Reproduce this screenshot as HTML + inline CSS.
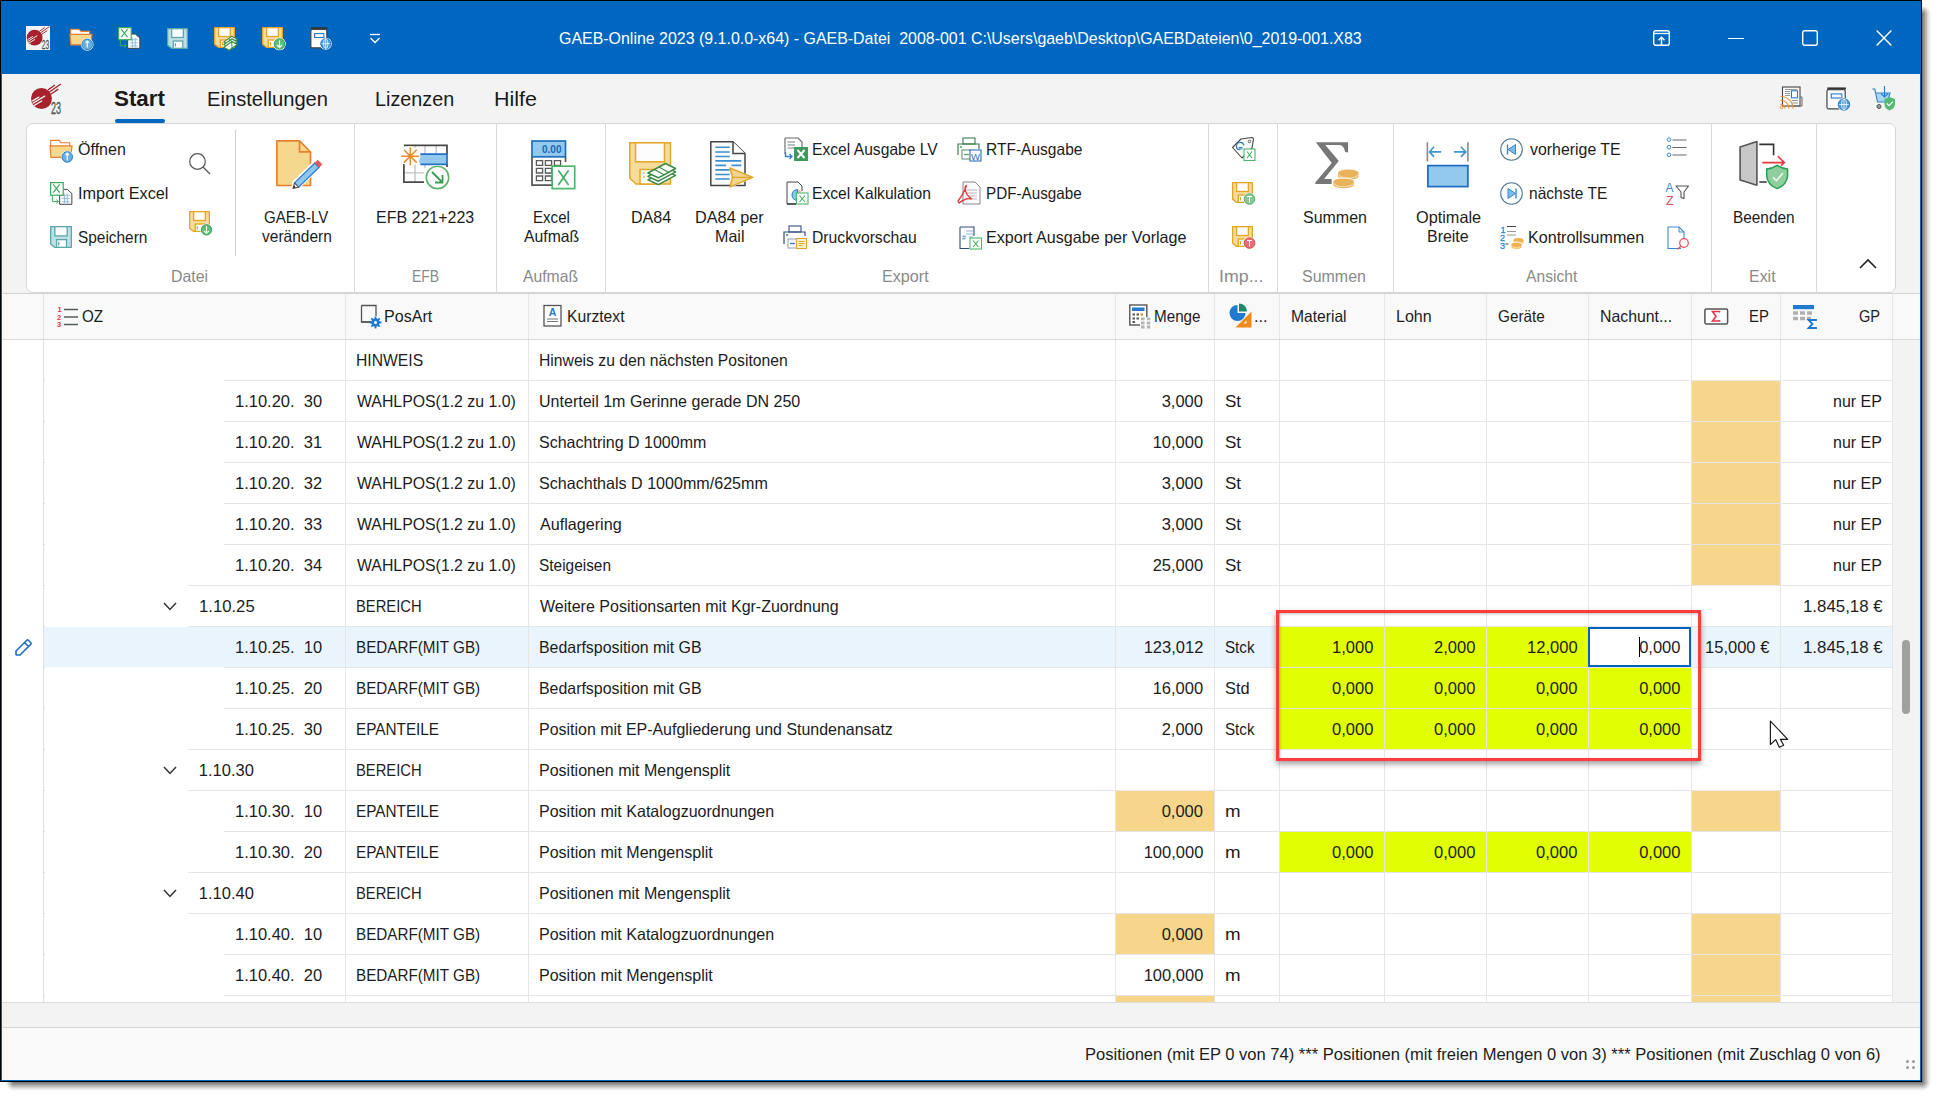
<!DOCTYPE html>
<html><head><meta charset="utf-8"><title>GAEB-Online</title>
<style>
html,body{margin:0;padding:0;width:1937px;height:1097px;overflow:hidden;background:#fff;}
body{position:relative;font-family:"Liberation Sans",sans-serif;}
.r{position:absolute;box-sizing:border-box;}
svg.r{overflow:visible}
.t{position:absolute;white-space:pre;line-height:1;}
</style></head><body>
<div class="r" style="left:1922px;top:14px;width:9px;height:1068px;background:linear-gradient(to right, rgba(0,0,0,0.56), rgba(0,0,0,0.34) 35%, rgba(0,0,0,0.12) 70%, rgba(0,0,0,0) 100%)"></div>
<div class="r" style="left:14px;top:1082px;width:1908px;height:9px;background:linear-gradient(to bottom, rgba(0,0,0,0.56), rgba(0,0,0,0.34) 35%, rgba(0,0,0,0.12) 70%, rgba(0,0,0,0) 100%)"></div>
<div class="r" style="left:1922px;top:1082px;width:9px;height:9px;background:radial-gradient(circle 9px at 0 0, rgba(0,0,0,0.56), rgba(0,0,0,0.34) 35%, rgba(0,0,0,0.12) 70%, rgba(0,0,0,0) 100%)"></div>
<div class="r" style="left:1922px;top:5px;width:9px;height:9px;background:radial-gradient(circle 9px at 0 100%, rgba(0,0,0,0.56), rgba(0,0,0,0.34) 35%, rgba(0,0,0,0.12) 70%, rgba(0,0,0,0) 100%)"></div>
<div class="r" style="left:5px;top:1082px;width:9px;height:9px;background:radial-gradient(circle 9px at 100% 0, rgba(0,0,0,0.56), rgba(0,0,0,0.34) 35%, rgba(0,0,0,0.12) 70%, rgba(0,0,0,0) 100%)"></div>
<div class="r" style="left:0px;top:0px;width:1922px;height:1082px;background:#000;"></div>
<div class="r" style="left:1px;top:1px;width:1920px;height:1080px;background:#0067c0;"></div>
<div class="r" style="left:2px;top:74px;width:1918px;height:220px;background:#f3f3f3;"></div>
<div class="t" id="t0" style="top:30.58px;font-size:16.8px;color:#ffffff;left:559.06px;transform:scaleX(0.9498);transform-origin:0 0;">GAEB-Online 2023 (9.1.0.0-x64) - GAEB-Datei  2008-001 C:\Users\gaeb\Desktop\GAEBDateien\0_2019-001.X83</div>
<div class="t" id="t1" style="top:87.78px;font-size:22px;color:#1a1a1a;font-weight:bold;left:114.48px;transform:scaleX(1.0165);transform-origin:0 0;">Start</div>
<div class="r" style="left:115px;top:119px;width:50px;height:4px;background:#0067c0;border-radius:2px;"></div>
<div class="t" id="t2" style="top:88.22px;font-size:21px;color:#1a1a1a;left:206.70px;transform:scaleX(0.9597);transform-origin:0 0;">Einstellungen</div>
<div class="t" id="t3" style="top:88.22px;font-size:21px;color:#1a1a1a;left:374.51px;transform:scaleX(0.9431);transform-origin:0 0;">Lizenzen</div>
<div class="t" id="t4" style="top:88.22px;font-size:21px;color:#1a1a1a;left:493.95px;transform:scaleX(1.0225);transform-origin:0 0;">Hilfe</div>
<div class="r" style="left:26px;top:123px;width:1870px;height:170px;background:#fff;border:1px solid #d6d6d6;border-radius:7px;"></div>
<div class="r" style="left:2px;top:293px;width:1918px;height:1px;background:#d2d2d2;"></div>
<div class="r" style="left:354px;top:124px;width:1px;height:168px;background:#dadada;"></div>
<div class="r" style="left:496px;top:124px;width:1px;height:168px;background:#dadada;"></div>
<div class="r" style="left:605px;top:124px;width:1px;height:168px;background:#dadada;"></div>
<div class="r" style="left:1208px;top:124px;width:1px;height:168px;background:#dadada;"></div>
<div class="r" style="left:1277px;top:124px;width:1px;height:168px;background:#dadada;"></div>
<div class="r" style="left:1393px;top:124px;width:1px;height:168px;background:#dadada;"></div>
<div class="r" style="left:1711px;top:124px;width:1px;height:168px;background:#dadada;"></div>
<div class="r" style="left:1816px;top:124px;width:1px;height:168px;background:#dadada;"></div>
<div class="r" style="left:235px;top:130px;width:1px;height:126px;background:#d0d0d0;"></div>
<div class="t" id="t5" style="top:268.03px;font-size:16.5px;color:#8a8a8a;left:171.02px;transform:scaleX(0.9642);transform-origin:0 0;">Datei</div>
<div class="t" id="t6" style="top:268.03px;font-size:16.5px;color:#8a8a8a;left:411.64px;transform:scaleX(0.8440);transform-origin:0 0;">EFB</div>
<div class="t" id="t7" style="top:268.03px;font-size:16.5px;color:#8a8a8a;left:522.60px;transform:scaleX(0.9529);transform-origin:0 0;">Aufmaß</div>
<div class="t" id="t8" style="top:268.03px;font-size:16.5px;color:#8a8a8a;left:882.02px;transform:scaleX(0.9787);transform-origin:0 0;">Export</div>
<div class="t" id="t9" style="top:268.03px;font-size:16.5px;color:#8a8a8a;left:1218.90px;transform:scaleX(1.0776);transform-origin:0 0;">Imp...</div>
<div class="t" id="t10" style="top:268.03px;font-size:16.5px;color:#8a8a8a;left:1302.03px;transform:scaleX(0.9688);transform-origin:0 0;">Summen</div>
<div class="t" id="t11" style="top:268.03px;font-size:16.5px;color:#8a8a8a;left:1526.42px;transform:scaleX(0.9487);transform-origin:0 0;">Ansicht</div>
<div class="t" id="t12" style="top:268.03px;font-size:16.5px;color:#8a8a8a;left:1749.04px;transform:scaleX(0.9659);transform-origin:0 0;">Exit</div>
<div class="t" id="t13" style="top:141.03px;font-size:16.5px;color:#1c1c1c;left:77.80px;transform:scaleX(0.9713);transform-origin:0 0;">Öffnen</div>
<div class="t" id="t14" style="top:185.03px;font-size:16.5px;color:#1c1c1c;left:77.60px;transform:scaleX(0.9869);transform-origin:0 0;">Import Excel</div>
<div class="t" id="t15" style="top:229.03px;font-size:16.5px;color:#1c1c1c;left:77.63px;transform:scaleX(0.9334);transform-origin:0 0;">Speichern</div>
<div class="t" id="t16" style="top:208.53px;font-size:16.5px;color:#1c1c1c;left:263.66px;transform:scaleX(0.9133);transform-origin:0 0;">GAEB-LV</div>
<div class="t" id="t17" style="top:227.53px;font-size:16.5px;color:#1c1c1c;left:262.21px;transform:scaleX(0.9398);transform-origin:0 0;">verändern</div>
<div class="t" id="t18" style="top:208.53px;font-size:16.5px;color:#1c1c1c;left:376.07px;transform:scaleX(0.9690);transform-origin:0 0;">EFB 221+223</div>
<div class="t" id="t19" style="top:208.53px;font-size:16.5px;color:#1c1c1c;left:532.69px;transform:scaleX(0.9135);transform-origin:0 0;">Excel</div>
<div class="t" id="t20" style="top:227.53px;font-size:16.5px;color:#1c1c1c;left:524.21px;transform:scaleX(0.9546);transform-origin:0 0;">Aufmaß</div>
<div class="t" id="t21" style="top:208.53px;font-size:16.5px;color:#1c1c1c;left:631.23px;transform:scaleX(0.9735);transform-origin:0 0;">DA84</div>
<div class="t" id="t22" style="top:208.53px;font-size:16.5px;color:#1c1c1c;left:695.01px;transform:scaleX(0.9855);transform-origin:0 0;">DA84 per</div>
<div class="t" id="t23" style="top:227.53px;font-size:16.5px;color:#1c1c1c;left:715.05px;transform:scaleX(0.9733);transform-origin:0 0;">Mail</div>
<div class="t" id="t24" style="top:141.03px;font-size:16.5px;color:#1c1c1c;left:811.91px;transform:scaleX(0.9479);transform-origin:0 0;">Excel Ausgabe LV</div>
<div class="t" id="t25" style="top:185.03px;font-size:16.5px;color:#1c1c1c;left:811.87px;transform:scaleX(0.9466);transform-origin:0 0;">Excel Kalkulation</div>
<div class="t" id="t26" style="top:229.03px;font-size:16.5px;color:#1c1c1c;left:811.89px;transform:scaleX(0.9525);transform-origin:0 0;">Druckvorschau</div>
<div class="t" id="t27" style="top:141.03px;font-size:16.5px;color:#1c1c1c;left:986.02px;transform:scaleX(0.9416);transform-origin:0 0;">RTF-Ausgabe</div>
<div class="t" id="t28" style="top:185.03px;font-size:16.5px;color:#1c1c1c;left:986.04px;transform:scaleX(0.9230);transform-origin:0 0;">PDF-Ausgabe</div>
<div class="t" id="t29" style="top:229.03px;font-size:16.5px;color:#1c1c1c;left:986.03px;transform:scaleX(0.9756);transform-origin:0 0;">Export Ausgabe per Vorlage</div>
<div class="t" id="t30" style="top:208.53px;font-size:16.5px;color:#1c1c1c;left:1303.03px;transform:scaleX(0.9688);transform-origin:0 0;">Summen</div>
<div class="t" id="t31" style="top:208.53px;font-size:16.5px;color:#1c1c1c;left:1415.97px;transform:scaleX(0.9866);transform-origin:0 0;">Optimale</div>
<div class="t" id="t32" style="top:227.53px;font-size:16.5px;color:#1c1c1c;left:1427.29px;transform:scaleX(0.9668);transform-origin:0 0;">Breite</div>
<div class="t" id="t33" style="top:141.03px;font-size:16.5px;color:#1c1c1c;left:1529.62px;transform:scaleX(0.9625);transform-origin:0 0;">vorherige TE</div>
<div class="t" id="t34" style="top:185.03px;font-size:16.5px;color:#1c1c1c;left:1528.72px;transform:scaleX(0.9410);transform-origin:0 0;">nächste TE</div>
<div class="t" id="t35" style="top:229.03px;font-size:16.5px;color:#1c1c1c;left:1527.99px;transform:scaleX(0.9751);transform-origin:0 0;">Kontrollsummen</div>
<div class="t" id="t36" style="top:208.53px;font-size:16.5px;color:#1c1c1c;left:1733.49px;transform:scaleX(0.9312);transform-origin:0 0;">Beenden</div>
<svg class="r" style="left:1858px;top:258px" width="20" height="12" viewBox="0 0 20 12"><polyline points="2,10 10,2 18,10" fill="none" stroke="#222" stroke-width="1.6"/></svg>
<div class="r" style="left:2px;top:294px;width:1918px;height:45px;background:#f9f9f9;"></div>
<div class="r" style="left:2px;top:339px;width:1890px;height:663px;background:#ffffff;"></div>
<div class="r" style="left:1892px;top:339px;width:28px;height:663px;background:#f3f3f3;"></div>
<div class="r" style="left:1902px;top:640px;width:8px;height:74px;background:#a0a0a0;border-radius:4px;"></div>
<div class="r" style="left:2px;top:1002px;width:1918px;height:25px;background:#f3f3f3;"></div>
<div class="r" style="left:2px;top:1002px;width:1918px;height:1px;background:#dcdcdc;"></div>
<div class="r" style="left:2px;top:1027px;width:1918px;height:1px;background:#d6d6d6;"></div>
<div class="r" style="left:2px;top:1028px;width:1918px;height:52px;background:#f9f9f9;"></div>
<div class="r" style="left:224px;top:380px;width:1668px;height:1px;background:#e6e6e6;"></div>
<div class="r" style="left:44px;top:380px;width:1px;height:1px;background:#d8d8d8;"></div>
<div class="t" style="top:352.03px;left:356.15px;font-size:16.5px;color:#1c1c1c;transform:scaleX(0.9507);transform-origin:0 0">HINWEIS</div>
<div class="t" style="top:352.03px;left:539.15px;font-size:16.5px;color:#1c1c1c;transform:scaleX(0.9512);transform-origin:0 0">Hinweis zu den nächsten Positonen</div>
<div class="r" style="left:1691px;top:381px;width:89px;height:40px;background:#f5d68b;"></div>
<div class="r" style="left:224px;top:421px;width:1668px;height:1px;background:#e6e6e6;"></div>
<div class="r" style="left:44px;top:421px;width:1px;height:1px;background:#d8d8d8;"></div>
<div class="t" style="top:393.03px;left:235.30px;font-size:16.5px;color:#1c1c1c;transform:scaleX(0.9988);transform-origin:0 0">1.10.20.  30</div>
<div class="t" style="top:393.03px;left:357.10px;font-size:16.5px;color:#1c1c1c;transform:scaleX(0.9598);transform-origin:0 0">WAHLPOS(1.2 zu 1.0)</div>
<div class="t" style="top:393.03px;left:539.13px;font-size:16.5px;color:#1c1c1c;transform:scaleX(0.9723);transform-origin:0 0">Unterteil 1m Gerinne gerade DN 250</div>
<div class="t" style="top:393.03px;left:1161.70px;font-size:16.5px;color:#1c1c1c;transform:scaleX(1.0000);transform-origin:0 0">3,000</div>
<div class="t" style="top:393.03px;left:1225.17px;font-size:16.5px;color:#1c1c1c;transform:scaleX(1.0333);transform-origin:0 0">St</div>
<div class="t" style="top:393.03px;left:1832.73px;font-size:16.5px;color:#1c1c1c;transform:scaleX(0.9694);transform-origin:0 0">nur EP</div>
<div class="r" style="left:1691px;top:422px;width:89px;height:40px;background:#f5d68b;"></div>
<div class="r" style="left:224px;top:462px;width:1668px;height:1px;background:#e6e6e6;"></div>
<div class="r" style="left:44px;top:462px;width:1px;height:1px;background:#d8d8d8;"></div>
<div class="t" style="top:434.03px;left:235.30px;font-size:16.5px;color:#1c1c1c;transform:scaleX(0.9988);transform-origin:0 0">1.10.20.  31</div>
<div class="t" style="top:434.03px;left:357.10px;font-size:16.5px;color:#1c1c1c;transform:scaleX(0.9598);transform-origin:0 0">WAHLPOS(1.2 zu 1.0)</div>
<div class="t" style="top:434.03px;left:539.13px;font-size:16.5px;color:#1c1c1c;transform:scaleX(0.9708);transform-origin:0 0">Schachtring D 1000mm</div>
<div class="t" style="top:434.03px;left:1152.70px;font-size:16.5px;color:#1c1c1c;transform:scaleX(1.0000);transform-origin:0 0">10,000</div>
<div class="t" style="top:434.03px;left:1225.17px;font-size:16.5px;color:#1c1c1c;transform:scaleX(1.0333);transform-origin:0 0">St</div>
<div class="t" style="top:434.03px;left:1832.73px;font-size:16.5px;color:#1c1c1c;transform:scaleX(0.9694);transform-origin:0 0">nur EP</div>
<div class="r" style="left:1691px;top:463px;width:89px;height:40px;background:#f5d68b;"></div>
<div class="r" style="left:224px;top:503px;width:1668px;height:1px;background:#e6e6e6;"></div>
<div class="r" style="left:44px;top:503px;width:1px;height:1px;background:#d8d8d8;"></div>
<div class="t" style="top:475.03px;left:235.30px;font-size:16.5px;color:#1c1c1c;transform:scaleX(0.9988);transform-origin:0 0">1.10.20.  32</div>
<div class="t" style="top:475.03px;left:357.10px;font-size:16.5px;color:#1c1c1c;transform:scaleX(0.9598);transform-origin:0 0">WAHLPOS(1.2 zu 1.0)</div>
<div class="t" style="top:475.03px;left:539.13px;font-size:16.5px;color:#1c1c1c;transform:scaleX(0.9747);transform-origin:0 0">Schachthals D 1000mm/625mm</div>
<div class="t" style="top:475.03px;left:1161.70px;font-size:16.5px;color:#1c1c1c;transform:scaleX(1.0000);transform-origin:0 0">3,000</div>
<div class="t" style="top:475.03px;left:1225.17px;font-size:16.5px;color:#1c1c1c;transform:scaleX(1.0333);transform-origin:0 0">St</div>
<div class="t" style="top:475.03px;left:1832.73px;font-size:16.5px;color:#1c1c1c;transform:scaleX(0.9694);transform-origin:0 0">nur EP</div>
<div class="r" style="left:1691px;top:504px;width:89px;height:40px;background:#f5d68b;"></div>
<div class="r" style="left:224px;top:544px;width:1668px;height:1px;background:#e6e6e6;"></div>
<div class="r" style="left:44px;top:544px;width:1px;height:1px;background:#d8d8d8;"></div>
<div class="t" style="top:516.03px;left:235.30px;font-size:16.5px;color:#1c1c1c;transform:scaleX(0.9988);transform-origin:0 0">1.10.20.  33</div>
<div class="t" style="top:516.03px;left:357.10px;font-size:16.5px;color:#1c1c1c;transform:scaleX(0.9598);transform-origin:0 0">WAHLPOS(1.2 zu 1.0)</div>
<div class="t" style="top:516.03px;left:540.10px;font-size:16.5px;color:#1c1c1c;transform:scaleX(0.9783);transform-origin:0 0">Auflagering</div>
<div class="t" style="top:516.03px;left:1161.70px;font-size:16.5px;color:#1c1c1c;transform:scaleX(1.0000);transform-origin:0 0">3,000</div>
<div class="t" style="top:516.03px;left:1225.17px;font-size:16.5px;color:#1c1c1c;transform:scaleX(1.0333);transform-origin:0 0">St</div>
<div class="t" style="top:516.03px;left:1832.73px;font-size:16.5px;color:#1c1c1c;transform:scaleX(0.9694);transform-origin:0 0">nur EP</div>
<div class="r" style="left:1691px;top:545px;width:89px;height:40px;background:#f5d68b;"></div>
<div class="r" style="left:188px;top:585px;width:1704px;height:1px;background:#e6e6e6;"></div>
<div class="r" style="left:44px;top:585px;width:1px;height:1px;background:#d8d8d8;"></div>
<div class="t" style="top:557.03px;left:235.30px;font-size:16.5px;color:#1c1c1c;transform:scaleX(0.9988);transform-origin:0 0">1.10.20.  34</div>
<div class="t" style="top:557.03px;left:357.10px;font-size:16.5px;color:#1c1c1c;transform:scaleX(0.9598);transform-origin:0 0">WAHLPOS(1.2 zu 1.0)</div>
<div class="t" style="top:557.03px;left:539.17px;font-size:16.5px;color:#1c1c1c;transform:scaleX(0.9347);transform-origin:0 0">Steigeisen</div>
<div class="t" style="top:557.03px;left:1152.70px;font-size:16.5px;color:#1c1c1c;transform:scaleX(1.0000);transform-origin:0 0">25,000</div>
<div class="t" style="top:557.03px;left:1225.17px;font-size:16.5px;color:#1c1c1c;transform:scaleX(1.0333);transform-origin:0 0">St</div>
<div class="t" style="top:557.03px;left:1832.73px;font-size:16.5px;color:#1c1c1c;transform:scaleX(0.9694);transform-origin:0 0">nur EP</div>
<div class="r" style="left:188px;top:626px;width:1704px;height:1px;background:#e6e6e6;"></div>
<div class="r" style="left:44px;top:626px;width:1px;height:1px;background:#d8d8d8;"></div>
<div class="t" style="top:598.03px;left:198.79px;font-size:16.5px;color:#1c1c1c;transform:scaleX(1.0113);transform-origin:0 0">1.10.25</div>
<svg class="r" style="left:163px;top:602px" width="14" height="9" viewBox="0 0 14 9"><polyline points="1,1 7,7.5 13,1" fill="none" stroke="#333" stroke-width="1.5"/></svg>
<div class="t" style="top:598.03px;left:356.21px;font-size:16.5px;color:#1c1c1c;transform:scaleX(0.8944);transform-origin:0 0">BEREICH</div>
<div class="t" style="top:598.03px;left:540.10px;font-size:16.5px;color:#1c1c1c;transform:scaleX(0.9700);transform-origin:0 0">Weitere Positionsarten mit Kgr-Zuordnung</div>
<div class="t" style="top:598.03px;left:1802.58px;font-size:16.5px;color:#1c1c1c;transform:scaleX(1.0211);transform-origin:0 0">1.845,18 €</div>
<div class="r" style="left:44px;top:627px;width:1848px;height:40px;background:#eaf4fd;"></div>
<div class="r" style="left:1279px;top:627px;width:105px;height:40px;background:#e1ff00;"></div>
<div class="r" style="left:1384px;top:627px;width:102px;height:40px;background:#e1ff00;"></div>
<div class="r" style="left:1486px;top:627px;width:102px;height:40px;background:#e1ff00;"></div>
<div class="r" style="left:224px;top:667px;width:1668px;height:1px;background:#e6e6e6;"></div>
<div class="r" style="left:44px;top:667px;width:1px;height:1px;background:#d8d8d8;"></div>
<div class="t" style="top:639.03px;left:235.30px;font-size:16.5px;color:#1c1c1c;transform:scaleX(0.9988);transform-origin:0 0">1.10.25.  10</div>
<div class="t" style="top:639.03px;left:356.18px;font-size:16.5px;color:#1c1c1c;transform:scaleX(0.9233);transform-origin:0 0">BEDARF(MIT GB)</div>
<div class="t" style="top:639.03px;left:539.14px;font-size:16.5px;color:#1c1c1c;transform:scaleX(0.9635);transform-origin:0 0">Bedarfsposition mit GB</div>
<div class="t" style="top:639.03px;left:1143.70px;font-size:16.5px;color:#1c1c1c;transform:scaleX(1.0000);transform-origin:0 0">123,012</div>
<div class="t" style="top:639.03px;left:1225.28px;font-size:16.5px;color:#1c1c1c;transform:scaleX(0.9194);transform-origin:0 0">Stck</div>
<div class="t" style="top:639.03px;left:1332.10px;font-size:16.5px;color:#1c1c1c;transform:scaleX(1.0000);transform-origin:0 0">1,000</div>
<div class="t" style="top:639.03px;left:1434.10px;font-size:16.5px;color:#1c1c1c;transform:scaleX(1.0000);transform-origin:0 0">2,000</div>
<div class="t" style="top:639.03px;left:1527.10px;font-size:16.5px;color:#1c1c1c;transform:scaleX(1.0000);transform-origin:0 0">12,000</div>
<div class="t" style="top:639.03px;left:1704.90px;font-size:16.5px;color:#1c1c1c;transform:scaleX(1.0016);transform-origin:0 0">15,000 €</div>
<div class="t" style="top:639.03px;left:1802.58px;font-size:16.5px;color:#1c1c1c;transform:scaleX(1.0211);transform-origin:0 0">1.845,18 €</div>
<div class="r" style="left:1279px;top:668px;width:105px;height:40px;background:#e1ff00;"></div>
<div class="r" style="left:1384px;top:668px;width:102px;height:40px;background:#e1ff00;"></div>
<div class="r" style="left:1486px;top:668px;width:102px;height:40px;background:#e1ff00;"></div>
<div class="r" style="left:1588px;top:668px;width:103px;height:40px;background:#e1ff00;"></div>
<div class="r" style="left:224px;top:708px;width:1668px;height:1px;background:#e6e6e6;"></div>
<div class="r" style="left:44px;top:708px;width:1px;height:1px;background:#d8d8d8;"></div>
<div class="t" style="top:680.03px;left:235.30px;font-size:16.5px;color:#1c1c1c;transform:scaleX(0.9988);transform-origin:0 0">1.10.25.  20</div>
<div class="t" style="top:680.03px;left:356.18px;font-size:16.5px;color:#1c1c1c;transform:scaleX(0.9233);transform-origin:0 0">BEDARF(MIT GB)</div>
<div class="t" style="top:680.03px;left:539.14px;font-size:16.5px;color:#1c1c1c;transform:scaleX(0.9635);transform-origin:0 0">Bedarfsposition mit GB</div>
<div class="t" style="top:680.03px;left:1152.70px;font-size:16.5px;color:#1c1c1c;transform:scaleX(1.0000);transform-origin:0 0">16,000</div>
<div class="t" style="top:680.03px;left:1225.21px;font-size:16.5px;color:#1c1c1c;transform:scaleX(0.9913);transform-origin:0 0">Std</div>
<div class="t" style="top:680.03px;left:1332.10px;font-size:16.5px;color:#1c1c1c;transform:scaleX(1.0000);transform-origin:0 0">0,000</div>
<div class="t" style="top:680.03px;left:1434.10px;font-size:16.5px;color:#1c1c1c;transform:scaleX(1.0000);transform-origin:0 0">0,000</div>
<div class="t" style="top:680.03px;left:1536.10px;font-size:16.5px;color:#1c1c1c;transform:scaleX(1.0000);transform-origin:0 0">0,000</div>
<div class="t" style="top:680.03px;left:1639.20px;font-size:16.5px;color:#1c1c1c;transform:scaleX(1.0000);transform-origin:0 0">0,000</div>
<div class="r" style="left:1279px;top:709px;width:105px;height:40px;background:#e1ff00;"></div>
<div class="r" style="left:1384px;top:709px;width:102px;height:40px;background:#e1ff00;"></div>
<div class="r" style="left:1486px;top:709px;width:102px;height:40px;background:#e1ff00;"></div>
<div class="r" style="left:1588px;top:709px;width:103px;height:40px;background:#e1ff00;"></div>
<div class="r" style="left:188px;top:749px;width:1704px;height:1px;background:#e6e6e6;"></div>
<div class="r" style="left:44px;top:749px;width:1px;height:1px;background:#d8d8d8;"></div>
<div class="t" style="top:721.03px;left:235.30px;font-size:16.5px;color:#1c1c1c;transform:scaleX(0.9988);transform-origin:0 0">1.10.25.  30</div>
<div class="t" style="top:721.03px;left:356.17px;font-size:16.5px;color:#1c1c1c;transform:scaleX(0.9273);transform-origin:0 0">EPANTEILE</div>
<div class="t" style="top:721.03px;left:539.13px;font-size:16.5px;color:#1c1c1c;transform:scaleX(0.9668);transform-origin:0 0">Position mit EP-Aufgliederung und Stundenansatz</div>
<div class="t" style="top:721.03px;left:1161.70px;font-size:16.5px;color:#1c1c1c;transform:scaleX(1.0000);transform-origin:0 0">2,000</div>
<div class="t" style="top:721.03px;left:1225.28px;font-size:16.5px;color:#1c1c1c;transform:scaleX(0.9194);transform-origin:0 0">Stck</div>
<div class="t" style="top:721.03px;left:1332.10px;font-size:16.5px;color:#1c1c1c;transform:scaleX(1.0000);transform-origin:0 0">0,000</div>
<div class="t" style="top:721.03px;left:1434.10px;font-size:16.5px;color:#1c1c1c;transform:scaleX(1.0000);transform-origin:0 0">0,000</div>
<div class="t" style="top:721.03px;left:1536.10px;font-size:16.5px;color:#1c1c1c;transform:scaleX(1.0000);transform-origin:0 0">0,000</div>
<div class="t" style="top:721.03px;left:1639.20px;font-size:16.5px;color:#1c1c1c;transform:scaleX(1.0000);transform-origin:0 0">0,000</div>
<div class="r" style="left:188px;top:790px;width:1704px;height:1px;background:#e6e6e6;"></div>
<div class="r" style="left:44px;top:790px;width:1px;height:1px;background:#d8d8d8;"></div>
<div class="t" style="top:762.03px;left:198.80px;font-size:16.5px;color:#1c1c1c;transform:scaleX(1.0000);transform-origin:0 0">1.10.30</div>
<svg class="r" style="left:163px;top:766px" width="14" height="9" viewBox="0 0 14 9"><polyline points="1,1 7,7.5 13,1" fill="none" stroke="#333" stroke-width="1.5"/></svg>
<div class="t" style="top:762.03px;left:356.21px;font-size:16.5px;color:#1c1c1c;transform:scaleX(0.8944);transform-origin:0 0">BEREICH</div>
<div class="t" style="top:762.03px;left:539.13px;font-size:16.5px;color:#1c1c1c;transform:scaleX(0.9699);transform-origin:0 0">Positionen mit Mengensplit</div>
<div class="r" style="left:1115px;top:791px;width:99px;height:40px;background:#f5d68b;"></div>
<div class="r" style="left:1691px;top:791px;width:89px;height:40px;background:#f5d68b;"></div>
<div class="r" style="left:224px;top:831px;width:1668px;height:1px;background:#e6e6e6;"></div>
<div class="r" style="left:44px;top:831px;width:1px;height:1px;background:#d8d8d8;"></div>
<div class="t" style="top:803.03px;left:235.30px;font-size:16.5px;color:#1c1c1c;transform:scaleX(0.9988);transform-origin:0 0">1.10.30.  10</div>
<div class="t" style="top:803.03px;left:356.17px;font-size:16.5px;color:#1c1c1c;transform:scaleX(0.9273);transform-origin:0 0">EPANTEILE</div>
<div class="t" style="top:803.03px;left:539.13px;font-size:16.5px;color:#1c1c1c;transform:scaleX(0.9712);transform-origin:0 0">Position mit Katalogzuordnungen</div>
<div class="t" style="top:803.03px;left:1161.70px;font-size:16.5px;color:#1c1c1c;transform:scaleX(1.0000);transform-origin:0 0">0,000</div>
<div class="t" style="top:803.03px;left:1225.07px;font-size:16.5px;color:#1c1c1c;transform:scaleX(1.1333);transform-origin:0 0">m</div>
<div class="r" style="left:1279px;top:832px;width:105px;height:40px;background:#e1ff00;"></div>
<div class="r" style="left:1384px;top:832px;width:102px;height:40px;background:#e1ff00;"></div>
<div class="r" style="left:1486px;top:832px;width:102px;height:40px;background:#e1ff00;"></div>
<div class="r" style="left:1588px;top:832px;width:103px;height:40px;background:#e1ff00;"></div>
<div class="r" style="left:188px;top:872px;width:1704px;height:1px;background:#e6e6e6;"></div>
<div class="r" style="left:44px;top:872px;width:1px;height:1px;background:#d8d8d8;"></div>
<div class="t" style="top:844.03px;left:235.30px;font-size:16.5px;color:#1c1c1c;transform:scaleX(0.9988);transform-origin:0 0">1.10.30.  20</div>
<div class="t" style="top:844.03px;left:356.17px;font-size:16.5px;color:#1c1c1c;transform:scaleX(0.9273);transform-origin:0 0">EPANTEILE</div>
<div class="t" style="top:844.03px;left:539.13px;font-size:16.5px;color:#1c1c1c;transform:scaleX(0.9713);transform-origin:0 0">Position mit Mengensplit</div>
<div class="t" style="top:844.03px;left:1143.70px;font-size:16.5px;color:#1c1c1c;transform:scaleX(1.0000);transform-origin:0 0">100,000</div>
<div class="t" style="top:844.03px;left:1225.07px;font-size:16.5px;color:#1c1c1c;transform:scaleX(1.1333);transform-origin:0 0">m</div>
<div class="t" style="top:844.03px;left:1332.10px;font-size:16.5px;color:#1c1c1c;transform:scaleX(1.0000);transform-origin:0 0">0,000</div>
<div class="t" style="top:844.03px;left:1434.10px;font-size:16.5px;color:#1c1c1c;transform:scaleX(1.0000);transform-origin:0 0">0,000</div>
<div class="t" style="top:844.03px;left:1536.10px;font-size:16.5px;color:#1c1c1c;transform:scaleX(1.0000);transform-origin:0 0">0,000</div>
<div class="t" style="top:844.03px;left:1639.20px;font-size:16.5px;color:#1c1c1c;transform:scaleX(1.0000);transform-origin:0 0">0,000</div>
<div class="r" style="left:188px;top:913px;width:1704px;height:1px;background:#e6e6e6;"></div>
<div class="r" style="left:44px;top:913px;width:1px;height:1px;background:#d8d8d8;"></div>
<div class="t" style="top:885.03px;left:198.80px;font-size:16.5px;color:#1c1c1c;transform:scaleX(1.0000);transform-origin:0 0">1.10.40</div>
<svg class="r" style="left:163px;top:889px" width="14" height="9" viewBox="0 0 14 9"><polyline points="1,1 7,7.5 13,1" fill="none" stroke="#333" stroke-width="1.5"/></svg>
<div class="t" style="top:885.03px;left:356.21px;font-size:16.5px;color:#1c1c1c;transform:scaleX(0.8944);transform-origin:0 0">BEREICH</div>
<div class="t" style="top:885.03px;left:539.13px;font-size:16.5px;color:#1c1c1c;transform:scaleX(0.9699);transform-origin:0 0">Positionen mit Mengensplit</div>
<div class="r" style="left:1115px;top:914px;width:99px;height:40px;background:#f5d68b;"></div>
<div class="r" style="left:1691px;top:914px;width:89px;height:40px;background:#f5d68b;"></div>
<div class="r" style="left:224px;top:954px;width:1668px;height:1px;background:#e6e6e6;"></div>
<div class="r" style="left:44px;top:954px;width:1px;height:1px;background:#d8d8d8;"></div>
<div class="t" style="top:926.03px;left:235.30px;font-size:16.5px;color:#1c1c1c;transform:scaleX(0.9988);transform-origin:0 0">1.10.40.  10</div>
<div class="t" style="top:926.03px;left:356.18px;font-size:16.5px;color:#1c1c1c;transform:scaleX(0.9233);transform-origin:0 0">BEDARF(MIT GB)</div>
<div class="t" style="top:926.03px;left:539.13px;font-size:16.5px;color:#1c1c1c;transform:scaleX(0.9712);transform-origin:0 0">Position mit Katalogzuordnungen</div>
<div class="t" style="top:926.03px;left:1161.70px;font-size:16.5px;color:#1c1c1c;transform:scaleX(1.0000);transform-origin:0 0">0,000</div>
<div class="t" style="top:926.03px;left:1225.07px;font-size:16.5px;color:#1c1c1c;transform:scaleX(1.1333);transform-origin:0 0">m</div>
<div class="r" style="left:1691px;top:955px;width:89px;height:40px;background:#f5d68b;"></div>
<div class="r" style="left:224px;top:995px;width:1668px;height:1px;background:#e6e6e6;"></div>
<div class="r" style="left:44px;top:995px;width:1px;height:1px;background:#d8d8d8;"></div>
<div class="t" style="top:967.03px;left:235.30px;font-size:16.5px;color:#1c1c1c;transform:scaleX(0.9988);transform-origin:0 0">1.10.40.  20</div>
<div class="t" style="top:967.03px;left:356.18px;font-size:16.5px;color:#1c1c1c;transform:scaleX(0.9233);transform-origin:0 0">BEDARF(MIT GB)</div>
<div class="t" style="top:967.03px;left:539.13px;font-size:16.5px;color:#1c1c1c;transform:scaleX(0.9713);transform-origin:0 0">Position mit Mengensplit</div>
<div class="t" style="top:967.03px;left:1143.70px;font-size:16.5px;color:#1c1c1c;transform:scaleX(1.0000);transform-origin:0 0">100,000</div>
<div class="t" style="top:967.03px;left:1225.07px;font-size:16.5px;color:#1c1c1c;transform:scaleX(1.1333);transform-origin:0 0">m</div>
<div class="r" style="left:1115px;top:996px;width:99px;height:6px;background:#f5d68b;"></div>
<div class="r" style="left:1691px;top:996px;width:89px;height:6px;background:#f5d68b;"></div>
<div class="r" style="left:345px;top:294px;width:1px;height:708px;background:#e6e6e6;"></div>
<div class="r" style="left:528px;top:294px;width:1px;height:708px;background:#e6e6e6;"></div>
<div class="r" style="left:1115px;top:294px;width:1px;height:708px;background:#e6e6e6;"></div>
<div class="r" style="left:1214px;top:294px;width:1px;height:708px;background:#e6e6e6;"></div>
<div class="r" style="left:1279px;top:294px;width:1px;height:708px;background:#e6e6e6;"></div>
<div class="r" style="left:1384px;top:294px;width:1px;height:708px;background:#e6e6e6;"></div>
<div class="r" style="left:1486px;top:294px;width:1px;height:708px;background:#e6e6e6;"></div>
<div class="r" style="left:1588px;top:294px;width:1px;height:708px;background:#e6e6e6;"></div>
<div class="r" style="left:1691px;top:294px;width:1px;height:708px;background:#e6e6e6;"></div>
<div class="r" style="left:1780px;top:294px;width:1px;height:708px;background:#e6e6e6;"></div>
<div class="r" style="left:1892px;top:294px;width:1px;height:708px;background:#e6e6e6;"></div>
<div class="r" style="left:43px;top:294px;width:1px;height:708px;background:#e0e0e0;"></div>
<div class="r" style="left:2px;top:339px;width:1918px;height:1px;background:#d9d9d9;"></div>
<div class="t" id="t37" style="top:308.03px;font-size:16.5px;color:#1c1c1c;left:82.49px;transform:scaleX(0.9214);transform-origin:0 0;">OZ</div>
<div class="t" id="t38" style="top:308.03px;font-size:16.5px;color:#1c1c1c;left:384.25px;transform:scaleX(0.9740);transform-origin:0 0;">PosArt</div>
<div class="t" id="t39" style="top:308.03px;font-size:16.5px;color:#1c1c1c;left:567.05px;transform:scaleX(0.9500);transform-origin:0 0;">Kurztext</div>
<div class="t" id="t40" style="top:308.03px;font-size:16.5px;color:#1c1c1c;left:1154.31px;transform:scaleX(0.9219);transform-origin:0 0;">Menge</div>
<div class="t" id="t41" style="top:308.03px;font-size:16.5px;color:#1c1c1c;left:1253.58px;transform:scaleX(0.9943);transform-origin:0 0;">...</div>
<div class="t" id="t42" style="top:308.03px;font-size:16.5px;color:#1c1c1c;left:1291.05px;transform:scaleX(0.9474);transform-origin:0 0;">Material</div>
<div class="t" id="t43" style="top:308.03px;font-size:16.5px;color:#1c1c1c;left:1396.03px;transform:scaleX(0.9714);transform-origin:0 0;">Lohn</div>
<div class="t" id="t44" style="top:308.03px;font-size:16.5px;color:#1c1c1c;left:1497.84px;transform:scaleX(0.9270);transform-origin:0 0;">Geräte</div>
<div class="t" id="t45" style="top:308.03px;font-size:16.5px;color:#1c1c1c;left:1600.04px;transform:scaleX(0.9589);transform-origin:0 0;">Nachunt...</div>
<div class="t" id="t46" style="top:308.03px;font-size:16.5px;color:#1c1c1c;left:1749.10px;transform:scaleX(0.9000);transform-origin:0 0;">EP</div>
<div class="t" id="t47" style="top:308.03px;font-size:16.5px;color:#1c1c1c;left:1858.88px;transform:scaleX(0.8840);transform-origin:0 0;">GP</div>
<div class="r" style="left:1588px;top:627px;width:103px;height:40px;background:#fff;border:2px solid #0063c4;"></div>
<div class="t" style="top:639.03px;left:1639.20px;font-size:16.5px;color:#1c1c1c;transform:scaleX(1.0000);transform-origin:0 0">0,000</div>
<div class="r" style="left:1639px;top:637px;width:1px;height:20px;background:#000;"></div>
<div class="r" style="left:1276px;top:610px;width:425px;height:151px;border:3px solid #fc3d3d;box-shadow:0px 3px 6px rgba(0,0,0,0.38), inset 1px 1px 3px rgba(0,0,0,0.25);"></div>
<div class="t" style="top:1046.03px;left:1085.30px;font-size:16.5px;color:#1c1c1c;transform:scaleX(1.0021);transform-origin:0 0">Positionen (mit EP 0 von 74) *** Positionen (mit freien Mengen 0 von 3) *** Positionen (mit Zuschlag 0 von 6)</div>
<div class="r" style="left:1906px;top:1060px;width:3px;height:3px;border-radius:2px;background:#999"></div>
<div class="r" style="left:1906px;top:1066px;width:3px;height:3px;border-radius:2px;background:#999"></div>
<div class="r" style="left:1912px;top:1060px;width:3px;height:3px;border-radius:2px;background:#999"></div>
<div class="r" style="left:1912px;top:1066px;width:3px;height:3px;border-radius:2px;background:#999"></div>
<svg class="r" style="left:26px;top:26px" width="24" height="24" viewBox="0 0 24 24"><rect x="0" y="0" width="24" height="24" fill="#f2f5f5"/><g transform="scale(0.75)"><circle cx="11.5" cy="15.5" r="10.5" fill="#a8222e"/><path d="M2.6,17.9 L8.8,14.1 M3,20.2 L14.7,13.1 M4.2,22.5 L11.8,18" stroke="#f2f5f5" stroke-width="1.3" stroke-linecap="round"/><path d="M18.5,6.6 L24.6,2.3 M19.8,8.8 L30.5,1.3 M21.4,10.7 L27.9,6.4" stroke="#a8222e" stroke-width="1.3" stroke-linecap="round"/><g transform="translate(21,30.8) scale(0.56,1)"><text x="0" y="0" font-family="Liberation Sans" font-size="16" fill="#555" stroke="#555" stroke-width="0.35">23</text></g></g></svg>
<div class="r" style="left:30px;top:83px;width:32px;height:32px;background:#f0f4f3"></div>
<svg class="r" style="left:30px;top:83px" width="32" height="32" viewBox="0 0 32 32"><g transform="scale(1.0)"><circle cx="11.5" cy="15.5" r="10.5" fill="#a8222e"/><path d="M2.6,17.9 L8.8,14.1 M3,20.2 L14.7,13.1 M4.2,22.5 L11.8,18" stroke="#f2f5f5" stroke-width="1.3" stroke-linecap="round"/><path d="M18.5,6.6 L24.6,2.3 M19.8,8.8 L30.5,1.3 M21.4,10.7 L27.9,6.4" stroke="#a8222e" stroke-width="1.3" stroke-linecap="round"/><g transform="translate(21,30.8) scale(0.56,1)"><text x="0" y="0" font-family="Liberation Sans" font-size="16" fill="#555" stroke="#555" stroke-width="0.35">23</text></g></g></svg>
<svg class="r" style="left:69px;top:28px" width="24" height="21" viewBox="0 0 24 21"><path d="M1.6800000000000002,6.3 V1.26 H10.08 L12.0,3.36 H20.64 V6.3" fill="#fdfdfd" stroke="#e8812e" stroke-width="1.1"/><path d="M1,6.3 H23.04 L21.6,16.8 L14.399999999999999,16.8 L1.92,16.8 Z" fill="#f5d78d" stroke="#e8812e" stroke-width="1.2"/><circle cx="18.240000000000002" cy="16.38" r="6.28" fill="#fff"/><circle cx="18.240000000000002" cy="16.38" r="5.28" fill="#6aaee0" stroke="#2d7dc6" stroke-width="1"/><path d="M18.240000000000002,19.53 V13.02 M16.56,14.7 L18.240000000000002,13.02 L19.919999999999998,14.7" stroke="#fff" stroke-width="1.2" fill="none"/></svg>
<svg class="r" style="left:49px;top:139px" width="24" height="23" viewBox="0 0 24 23"><path d="M1.6800000000000002,6.8999999999999995 V1.38 H10.08 L12.0,3.68 H20.64 V6.8999999999999995" fill="#fdfdfd" stroke="#e8812e" stroke-width="1.1"/><path d="M1,6.8999999999999995 H23.04 L21.6,18.400000000000002 L14.399999999999999,18.400000000000002 L1.92,18.400000000000002 Z" fill="#f5d78d" stroke="#e8812e" stroke-width="1.2"/><circle cx="18.240000000000002" cy="17.94" r="6.28" fill="#fff"/><circle cx="18.240000000000002" cy="17.94" r="5.28" fill="#6aaee0" stroke="#2d7dc6" stroke-width="1"/><path d="M18.240000000000002,21.39 V14.26 M16.56,16.099999999999998 L18.240000000000002,14.26 L19.919999999999998,16.099999999999998" stroke="#fff" stroke-width="1.2" fill="none"/></svg>
<svg class="r" style="left:118px;top:27px" width="23" height="22" viewBox="0 0 23 22"><path d="M9.66,7.04 H17.25 L21.849999999999998,11.0 V21.34 H9.66 Z" fill="#fdfdfd" stroke="#444" stroke-width="1"/><path d="M11.96,12.76 H19.78 M11.96,15.84 H19.78 M11.96,18.919999999999998 H19.78 M14.49,11.0 V20.240000000000002 M17.25,11.0 V20.240000000000002" stroke="#8cb8e0" stroke-width="0.9"/><rect x="0.6" y="0.6" width="12.65" height="12.100000000000001" fill="#fdfdfd" stroke="#3daa5c" stroke-width="1.2"/><path d="M3.22,2.2 L9.66,10.120000000000001 M9.66,2.2 L3.22,10.120000000000001" stroke="#3daa5c" stroke-width="1.1"/><path d="M2.3000000000000003,13.2 V18.7 H8.049999999999999 M6.44,16.72 L8.28,18.7 L6.44,20.68" stroke="#3daa5c" stroke-width="1" fill="none"/></svg>
<svg class="r" style="left:50px;top:182px" width="23" height="23" viewBox="0 0 23 23"><path d="M9.66,7.36 H17.25 L21.849999999999998,11.5 V22.31 H9.66 Z" fill="#fdfdfd" stroke="#444" stroke-width="1"/><path d="M11.96,13.34 H19.78 M11.96,16.56 H19.78 M11.96,19.78 H19.78 M14.49,11.5 V21.16 M17.25,11.5 V21.16" stroke="#8cb8e0" stroke-width="0.9"/><rect x="0.6" y="0.6" width="12.65" height="12.65" fill="#fdfdfd" stroke="#3daa5c" stroke-width="1.2"/><path d="M3.22,2.3000000000000003 L9.66,10.58 M9.66,2.3000000000000003 L3.22,10.58" stroke="#3daa5c" stroke-width="1.1"/><path d="M2.3000000000000003,13.799999999999999 V19.55 H8.049999999999999 M6.44,17.48 L8.28,19.55 L6.44,21.619999999999997" stroke="#3daa5c" stroke-width="1" fill="none"/></svg>
<svg class="r" style="left:167px;top:28px" width="21" height="21" viewBox="0 0 21 21"><path d="M0.65,0.65 H20.35 V20.35 H4.43 L0.65,17.22 Z" fill="#bfe0e2" stroke="#5aa8ad" stroke-width="1.3"/><rect x="4.62" y="0.65" width="11.760000000000002" height="8.82" fill="#fdfdfd" stroke="#5aa8ad" stroke-width="1.3"/><rect x="6.3" y="13.02" width="9.450000000000001" height="7.33" fill="#fdfdfd" stroke="#5aa8ad" stroke-width="1.3"/><rect x="7.77" y="15.12" width="1.26" height="3.36" fill="#5aa8ad"/></svg>
<svg class="r" style="left:50px;top:226px" width="22" height="22" viewBox="0 0 22 22"><path d="M0.65,0.65 H21.35 V21.35 H4.61 L0.65,18.04 Z" fill="#bfe0e2" stroke="#5aa8ad" stroke-width="1.3"/><rect x="4.84" y="0.65" width="12.32" height="9.24" fill="#fdfdfd" stroke="#5aa8ad" stroke-width="1.3"/><rect x="6.6" y="13.64" width="9.9" height="7.709999999999999" fill="#fdfdfd" stroke="#5aa8ad" stroke-width="1.3"/><rect x="8.14" y="15.84" width="1.3199999999999998" height="3.52" fill="#5aa8ad"/></svg>
<svg class="r" style="left:214px;top:27px" width="21" height="21" viewBox="0 0 21 21"><path d="M0.65,0.65 H20.35 V20.35 H4.43 L0.65,17.22 Z" fill="#f6dc9c" stroke="#e3a625" stroke-width="1.3"/><rect x="4.62" y="0.65" width="11.760000000000002" height="8.82" fill="#fdfdfd" stroke="#e3a625" stroke-width="1.3"/><rect x="6.3" y="13.02" width="9.450000000000001" height="7.33" fill="#fdfdfd" stroke="#e3a625" stroke-width="1.3"/><rect x="7.77" y="15.12" width="1.26" height="3.36" fill="#e3a625"/></svg>
<svg class="r" style="left:223px;top:35px" width="15" height="15" viewBox="0 0 15 15"><path d="M0.8,6.87 L8.9,1.2 L14.3,4.17 L6.2,9.84 Z" fill="#fdfdfd" stroke="#3f8f48" stroke-width="1.2" stroke-linejoin="round"/><path d="M0.8,9.57 L8.9,3.9000000000000004 L14.3,6.87 L6.2,12.54 Z" fill="#fdfdfd" stroke="#3f8f48" stroke-width="1.2" stroke-linejoin="round"/><path d="M0.8,12.27 L8.9,6.6000000000000005 L14.3,9.57 L6.2,15.24 Z" fill="#fdfdfd" stroke="#3f8f48" stroke-width="1.2" stroke-linejoin="round"/><path d="M5.659999999999999,3.9000000000000004 L9.17,6.6000000000000005 M8.629999999999999,6.87 L9.17,14.43" stroke="#3f8f48" stroke-width="1"/></svg>
<svg class="r" style="left:262px;top:27px" width="21" height="21" viewBox="0 0 21 21"><path d="M0.65,0.65 H20.35 V20.35 H4.43 L0.65,17.22 Z" fill="#f6dc9c" stroke="#e3a625" stroke-width="1.3"/><rect x="4.62" y="0.65" width="11.760000000000002" height="8.82" fill="#fdfdfd" stroke="#e3a625" stroke-width="1.3"/><rect x="6.3" y="13.02" width="9.450000000000001" height="7.33" fill="#fdfdfd" stroke="#e3a625" stroke-width="1.3"/><rect x="7.77" y="15.12" width="1.26" height="3.36" fill="#e3a625"/></svg>
<svg class="r" style="left:272px;top:37px" width="14" height="14" viewBox="0 0 14 14"><circle cx="7.5" cy="7" r="6.3" fill="#fff"/><circle cx="7.5" cy="7" r="5.3" fill="#58c07a" stroke="#3aa35e" stroke-width="1"/><path d="M7.5,3.5 V10.5 M5,8 L7.5,10.5 L10,8" stroke="#fff" stroke-width="1.1" fill="none"/></svg>
<svg class="r" style="left:310px;top:26px" width="21" height="23" viewBox="0 0 21 23"><path d="M1.26,1.84 H17.22 L16.38,3.68 H1.26" fill="#333" stroke="#333" stroke-width="1"/><rect x="0.84" y="3.4499999999999997" width="15.96" height="18.400000000000002" rx="1.5" fill="#fbfbfb" stroke="#444" stroke-width="1.2"/><rect x="4.62" y="7.590000000000001" width="9.24" height="3.91" fill="none" stroke="#2a7cc7" stroke-width="1.1"/><circle cx="15.75" cy="17.71" r="6.04" fill="#fff"/><circle cx="15.75" cy="17.71" r="5.04" fill="#4a98d8" stroke="#2a78c0" stroke-width="1"/><path d="M15.75,12.65 V22.77 M11.55,17.71 H19.95" stroke="#fff" stroke-width="0.8"/><ellipse cx="15.75" cy="17.71" rx="2.1" ry="4.62" fill="none" stroke="#fff" stroke-width="0.8"/></svg>
<svg class="r" style="left:369px;top:33px" width="12" height="11" viewBox="0 0 12 11"><path d="M1,1.5 H11" stroke="#fff" stroke-width="1.3"/><polyline points="1.5,5 6,9.5 10.5,5" fill="none" stroke="#fff" stroke-width="1.3"/></svg>
<svg class="r" style="left:1653px;top:30px" width="17" height="16" viewBox="0 0 17 16"><rect x="0.7" y="0.7" width="15.6" height="14.6" rx="2" fill="none" stroke="#fff" stroke-width="1.4"/><path d="M1,3.5 H16" stroke="#fff" stroke-width="1.3"/><path d="M8.5,15 V7.5 M5.5,10.3 L8.5,7.3 L11.5,10.3" fill="none" stroke="#fff" stroke-width="1.4"/></svg>
<div class="r" style="left:1728px;top:38px;width:16px;height:1.4px;background:#fff;"></div>
<svg class="r" style="left:1802px;top:30px" width="16" height="16" viewBox="0 0 16 16"><rect x="0.7" y="0.7" width="14.6" height="14.6" rx="2" fill="none" stroke="#fff" stroke-width="1.4"/></svg>
<svg class="r" style="left:1876px;top:30px" width="16" height="16" viewBox="0 0 16 16"><path d="M0.6,0.6 L15.4,15.4 M15.4,0.6 L0.6,15.4" stroke="#fff" stroke-width="1.4"/></svg>
<svg class="r" style="left:1780px;top:86px" width="24" height="24" viewBox="0 0 24 24"><rect x="2.5" y="1" width="17.5" height="19" fill="#fbfbfb" stroke="#444" stroke-width="1.1"/><path d="M20,11 H22 V20 H13" fill="none" stroke="#666" stroke-width="1"/><path d="M5,3.5 H17 M5,5.5 H10 M5,7.5 H10 M5,9.5 H10 M12,14.5 H18 M12,17 H18" stroke="#999" stroke-width="1"/><rect x="11.5" y="4.8" width="6" height="7" fill="#fff" stroke="#2a7cc7" stroke-width="1.1"/><path d="M0.5,10.5 A12,12 0 0 1 13,22.5 M0.5,14.5 A8,8 0 0 1 9,22.5 M0.5,18.5 A4,4 0 0 1 5,22.5" fill="none" stroke="#f0923c" stroke-width="1.2"/><circle cx="1.6" cy="21.4" r="1.3" fill="none" stroke="#f0923c" stroke-width="1"/></svg>
<svg class="r" style="left:1826px;top:86px" width="24" height="24" viewBox="0 0 24 24"><path d="M1.44,1.92 H19.68 L18.72,3.84 H1.44" fill="#333" stroke="#333" stroke-width="1"/><rect x="0.96" y="3.5999999999999996" width="18.240000000000002" height="19.200000000000003" rx="1.5" fill="#fbfbfb" stroke="#444" stroke-width="1.2"/><rect x="5.28" y="7.92" width="10.56" height="4.08" fill="none" stroke="#2a7cc7" stroke-width="1.1"/><circle cx="18.0" cy="18.48" r="6.76" fill="#fff"/><circle cx="18.0" cy="18.48" r="5.76" fill="#4a98d8" stroke="#2a78c0" stroke-width="1"/><path d="M18.0,13.200000000000001 V23.759999999999998 M13.200000000000001,18.48 H22.799999999999997" stroke="#fff" stroke-width="0.8"/><ellipse cx="18.0" cy="18.48" rx="2.4000000000000004" ry="5.28" fill="none" stroke="#fff" stroke-width="0.8"/></svg>
<svg class="r" style="left:1871px;top:86px" width="25" height="25" viewBox="0 0 25 25"><path d="M1.5,3 H3.8 L6.5,16 H16.5 L19,7 H5" fill="#a8d4f4" stroke="#2a7cc7" stroke-width="1.1" opacity="0.95"/><path d="M13.5,0 V11 M10,7.5 L13.5,11 L17,7.5" fill="none" stroke="#2a7cc7" stroke-width="1.1"/><circle cx="8" cy="20.5" r="2" fill="#999" stroke="#555" stroke-width="1"/><path d="M13.5,13 L18.5,11 L24,13 V18 Q24,22.5 18.5,24.5 Q13.5,22.5 13.5,18 Z" fill="#56b973"/><path d="M15.8,17.5 L18,19.6 L21.8,15.6" stroke="#fff" stroke-width="1.2" fill="none"/></svg>
<svg class="r" style="left:188px;top:152px" width="25" height="25" viewBox="0 0 25 25"><circle cx="9.5" cy="9.5" r="7.8" fill="none" stroke="#555" stroke-width="1.2"/><path d="M15,15 L22,22" stroke="#555" stroke-width="1.3"/></svg>
<svg class="r" style="left:189px;top:211px" width="21" height="21" viewBox="0 0 21 21"><path d="M0.65,0.65 H20.35 V20.35 H4.43 L0.65,17.22 Z" fill="#f6dc9c" stroke="#e3a625" stroke-width="1.3"/><rect x="4.62" y="0.65" width="11.760000000000002" height="8.82" fill="#fdfdfd" stroke="#e3a625" stroke-width="1.3"/><rect x="6.3" y="13.02" width="9.450000000000001" height="7.33" fill="#fdfdfd" stroke="#e3a625" stroke-width="1.3"/><rect x="7.77" y="15.12" width="1.26" height="3.36" fill="#e3a625"/></svg>
<svg class="r" style="left:199px;top:223px" width="14" height="14" viewBox="0 0 14 14"><circle cx="7.5" cy="6.8" r="6.2" fill="#fff"/><circle cx="7.5" cy="6.8" r="5.2" fill="#58c07a" stroke="#3aa35e" stroke-width="1"/><path d="M7.5,3.3 V10.3 M5,7.8 L7.5,10.3 L10,7.8" stroke="#fff" stroke-width="1.1" fill="none"/></svg>
<svg class="r" style="left:276px;top:140px" width="48" height="50" viewBox="0 0 48 50"><path d="M0.9,0.9 H23.5 L34.5,12 V45.5 H0.9 Z" fill="#f5d78d" stroke="#e8812e" stroke-width="1.7" stroke-linejoin="round"/><path d="M23.5,0.9 V11.8 H34.5" fill="none" stroke="#e8812e" stroke-width="1.7"/><path d="M15,49.5 L16.5,41.5 L38.5,20 L41.7,17 L48.5,24 L45.5,27 L23.5,48.5 Z" fill="#fff"/><path d="M18.5,42.9 L38.9,23 L43.1,27.2 L22.7,47.1 Z" fill="#8fc6ee" stroke="#2a7cc7" stroke-width="1.3" stroke-linejoin="round"/><path d="M38.9,23 L41.7,20.2 L45.9,24.4 L43.1,27.2 Z" fill="#e25b5b" stroke="#d64545" stroke-width="0.8"/><path d="M18.5,42.9 L22.7,47.1 L17,48.5 Z" fill="#fff" stroke="#555" stroke-width="1.1" stroke-linejoin="round"/><path d="M17,48.5 L18.3,45.5 L19.8,47.2 Z" fill="#333"/></svg>
<svg class="r" style="left:401px;top:144px" width="50" height="48" viewBox="0 0 50 48"><path d="M14,1.4 V10 M24,1.4 V10 M35.2,1.4 V10 M14,20 V38 M24,20 V24 M2.9,28.9 H23" stroke="#c4c4c4" stroke-width="1.4"/><path d="M2.9,1.4 H46 V10.5 M2.9,20 V38.1 H23 M46,20 V23" fill="none" stroke="#484848" stroke-width="1.7"/><path d="M19.5,10.1 H46 V20.4 H19.5 L16.7,15.2 Z" fill="#93c9ee"/><path d="M19.5,10.1 H46 V20.4 H19.5" fill="none" stroke="#2272c3" stroke-width="1.7"/><circle cx="9.3" cy="12.2" r="10" fill="#fff" opacity="0.9"/><path d="M9.3,3.2 V21.2 M0.3,12.2 H18.3 M2.9,5.8 L15.7,18.6 M15.7,5.8 L2.9,18.6" stroke="#ef8a32" stroke-width="1.5"/><circle cx="36.5" cy="33.4" r="12.4" fill="#fff"/><circle cx="36.5" cy="33.4" r="11.2" fill="#fff" stroke="#5db36e" stroke-width="1.6"/><path d="M31,28 L41.5,38.5 M34,38.5 H41.5 V31" fill="none" stroke="#3c9c52" stroke-width="1.8"/></svg>
<svg class="r" style="left:531px;top:140px" width="46" height="50" viewBox="0 0 46 50"><rect x="1" y="1" width="33.5" height="15.8" fill="#93c9ee" stroke="#1f6fbf" stroke-width="1.7"/><text x="30.5" y="13.2" text-anchor="end" font-family="Liberation Sans" font-weight="bold" font-size="10" fill="#1f63b0">0.00</text><path d="M1,16.8 V45.2 H21 M34.5,16.8 V22" fill="none" stroke="#555" stroke-width="1.7"/><path d="M5.4,20.6 h6.2 v4.7 h-6.2 Z M14.4,20.6 h6.2 v4.7 h-6.2 Z M23.4,20.6 h6.2 v4.7 h-6.2 Z M5.4,28.3 h6.2 v4.7 h-6.2 Z M14.4,28.3 h6.2 v4.7 h-6.2 Z M5.4,36 h6.2 v4.7 h-6.2 Z M14.4,36 h6.2 v4.7 h-6.2 Z" fill="none" stroke="#5a5a5a" stroke-width="1.3"/><rect x="21.2" y="26.2" width="22.5" height="22.4" fill="#fff" stroke="#4cb66c" stroke-width="1.7"/><path d="M27.3,30.2 L37.6,45 M37.6,30.2 L27.3,45" stroke="#3fae5e" stroke-width="1.6"/></svg>
<svg class="r" style="left:629px;top:142px" width="48" height="48" viewBox="0 0 48 48"><path d="M0.8,0.8 H41.5 V42 H7 L0.8,36 Z" fill="#f6dc9c" stroke="#e3a625" stroke-width="1.5"/><rect x="6.5" y="0.8" width="29" height="19" fill="#fdfdfd" stroke="#e3a625" stroke-width="1.5"/><rect x="11" y="27.5" width="20" height="14.5" fill="#fdfdfd" stroke="#e3a625" stroke-width="1.5"/><path d="M15,30 v2 M15,34 v2" stroke="#e3a625" stroke-width="1.2"/><path d="M17,31 L36,20 L49,26 L30,48 Z" fill="#fff" opacity="0"/><path d="M18.9,37.8 L36.4,28.3 L46.599999999999994,33.3 L29.4,42.599999999999994 Z" fill="#fbfdfb" stroke="#3d8b45" stroke-width="1.5" stroke-linejoin="round"/><path d="M18.9,34.4 L36.4,24.9 L46.599999999999994,29.9 L29.4,39.199999999999996 Z" fill="#fbfdfb" stroke="#3d8b45" stroke-width="1.5" stroke-linejoin="round"/><path d="M18.9,31.0 L36.4,21.5 L46.599999999999994,26.5 L29.4,35.8 Z" fill="#fbfdfb" stroke="#3d8b45" stroke-width="1.5" stroke-linejoin="round"/><path d="M25.4,27.5 L35.4,33.0 M29.9,25.0 L39.9,30.5" stroke="#3d8b45" stroke-width="1.1"/></svg>
<svg class="r" style="left:710px;top:141px" width="46" height="48" viewBox="0 0 46 48"><path d="M0.8,0.8 H23 L35,12.5 V44.5 H0.8 Z" fill="#fbfbfb" stroke="#444" stroke-width="1.5" stroke-linejoin="round"/><path d="M23,0.8 V12.5 H35" fill="#fff" stroke="#444" stroke-width="1.5"/><path d="M5.3,6.2 H19.7 M5.3,11 H19.7 M5.3,15.5 H19.7 M5.3,19.9 H31.3 M5.3,24.4 H16 M21.5,24.4 H31.3 M5.3,28.9 H19.7 M5.3,33.5 H19.7 M5.3,38 H19.7" stroke="#3b8fd4" stroke-width="1.6"/><path d="M19,25.5 L44,36.4 L19,47.5 L22.5,36.4 Z" fill="#fff"/><path d="M20,27 L42.9,36.4 L20,45.9 L22.5,36.4 Z" fill="#f3d48e" stroke="#e2a52a" stroke-width="1.5" stroke-linejoin="round"/><path d="M22.5,36.4 H42" stroke="#e2a52a" stroke-width="1.3"/></svg>
<svg class="r" style="left:783px;top:137px" width="26" height="26" viewBox="0 0 26 26"><path d="M2,1 H15 L19,5 V10 M2,1 V17" fill="none" stroke="#666" stroke-width="1.1"/><path d="M4.5,5 H12 M4.5,8 H12 M4.5,11 H12" stroke="#aaa" stroke-width="1.3"/><path d="M2.5,15 V19.5 H9 M6.5,17 L9,19.5 L6.5,22" fill="none" stroke="#3b82c8" stroke-width="1.4"/><rect x="11" y="10" width="14" height="14" fill="#3f9a5e"/><path d="M14.5,13 L21.5,21 M21.5,13 L14.5,21" stroke="#fff" stroke-width="1.9"/></svg>
<svg class="r" style="left:786px;top:181px" width="23" height="25" viewBox="0 0 23 25"><path d="M1,1 H12 L16,5 V10 M10,23 H1 Z" fill="#fbfbfb" stroke="#444" stroke-width="1"/><path d="M1,1 V23 H10" fill="none" stroke="#444" stroke-width="1"/><path d="M11.5,8.5 A5.5,5.5 0 1 0 11.5,19.5 Z" fill="#8cc4ec" stroke="#2e7cc4" stroke-width="1"/><path d="M12,8.5 A5.5,5.5 0 0 1 16,11 L12,12 Z" fill="#f5c58a"/><rect x="10.5" y="12" width="11.5" height="11" fill="#fff" stroke="#4cb66c" stroke-width="1.1"/><path d="M13.5,14.5 L19,21 M19,14.5 L13.5,21" stroke="#3fae5e" stroke-width="1.1"/></svg>
<svg class="r" style="left:783px;top:225px" width="26" height="26" viewBox="0 0 26 26"><rect x="6" y="1" width="12" height="6" fill="#fff" stroke="#30507a" stroke-width="1.1"/><path d="M1,19 V7 H22 V11" fill="none" stroke="#30507a" stroke-width="1.2"/><path d="M3,10 h2" stroke="#2e7cc4" stroke-width="1.3"/><rect x="5" y="14" width="9" height="9" fill="#fff" stroke="#8aa0b8" stroke-width="1"/><path d="M7,18.5 h5" stroke="#2e7cc4" stroke-width="1.3"/><rect x="13.5" y="13.5" width="10" height="10" fill="#fbf1d8" stroke="#e0a52c" stroke-width="1.1"/><path d="M15.5,16.5 h6 M15.5,18.5 h6 M15.5,20.5 h4" stroke="#e0a52c" stroke-width="1"/></svg>
<svg class="r" style="left:957px;top:137px" width="26" height="26" viewBox="0 0 26 26"><rect x="6" y="1" width="12" height="6" fill="#fff" stroke="#3d7d50" stroke-width="1.1"/><path d="M1,18 V7 H22 V12" fill="none" stroke="#3d7d50" stroke-width="1.2"/><path d="M3,10 h2" stroke="#3fae5e" stroke-width="1.3"/><rect x="5" y="13" width="9" height="9" fill="#fff" stroke="#5b8a66" stroke-width="1"/><path d="M7,17.5 h5" stroke="#3fae5e" stroke-width="1.3"/><rect x="13" y="13" width="11" height="11" fill="#fff" stroke="#2e6fbf" stroke-width="1.1"/><text x="18.5" y="22.5" text-anchor="middle" font-family="Liberation Sans" font-size="9.5" fill="#2e6fbf">W</text></svg>
<svg class="r" style="left:957px;top:181px" width="26" height="26" viewBox="0 0 26 26"><path d="M6,1 H18 L23,6 V23 H6 Z" fill="#fbfbfb" stroke="#888" stroke-width="1"/><path d="M9,9 H20 M9,12 H20 M12,15 H20 M12,18 H20" stroke="#bbb" stroke-width="1"/><path d="M1,20 Q6,14 9,6 Q10,3 8,6 Q8,14 15,18 Q10,16 2,22 Z" fill="none" stroke="#e33b3b" stroke-width="1.3"/></svg>
<svg class="r" style="left:959px;top:226px" width="24" height="24" viewBox="0 0 24 24"><path d="M1,1 H15 V10 M10,22.5 H1 Z" fill="#fbfbfb" stroke="#30507a" stroke-width="1.1"/><path d="M1,1 V22.5 H10" fill="none" stroke="#30507a" stroke-width="1.1"/><path d="M7,5 H14 M7,8 H14 M10,11 H14" stroke="#8cb8e0" stroke-width="1"/><text x="3" y="14" font-family="Liberation Sans" font-size="7" fill="#2e7cc4">#</text><rect x="11" y="12" width="11.5" height="11" fill="#fff" stroke="#4cb66c" stroke-width="1.1"/><path d="M14,14.5 L19.5,21 M19.5,14.5 L14,21" stroke="#3fae5e" stroke-width="1.1"/></svg>
<svg class="r" style="left:1231px;top:136px" width="25" height="26" viewBox="0 0 25 26"><path d="M1.5,11.5 L10,3 L21,1.5 Q22.5,1.5 22.5,3 L21,12 L11,22 Z" fill="#fbfbfb" stroke="#444" stroke-width="1.1" stroke-linejoin="round"/><circle cx="18.5" cy="5.5" r="1.3" fill="none" stroke="#555" stroke-width="0.9"/><path d="M8.5,14 A3.8,3.8 0 1 1 13,9.5 M7.5,11.5 h4 M7.5,13 h4" fill="none" stroke="#2e7cc4" stroke-width="1.2"/><rect x="13" y="13" width="11" height="11.5" fill="#fff" stroke="#4cb66c" stroke-width="1.1"/><path d="M16,15.5 L21,22 M21,15.5 L16,22" stroke="#3fae5e" stroke-width="1.1"/></svg>
<svg class="r" style="left:1232px;top:182px" width="21" height="21" viewBox="0 0 21 21"><path d="M0.65,0.65 H20.35 V20.35 H4.43 L0.65,17.22 Z" fill="#f6dc9c" stroke="#e3a625" stroke-width="1.3"/><rect x="4.62" y="0.65" width="11.760000000000002" height="8.82" fill="#fdfdfd" stroke="#e3a625" stroke-width="1.3"/><rect x="6.3" y="13.02" width="9.450000000000001" height="7.33" fill="#fdfdfd" stroke="#e3a625" stroke-width="1.3"/><rect x="7.77" y="15.12" width="1.26" height="3.36" fill="#e3a625"/></svg>
<svg class="r" style="left:1242px;top:192px" width="14" height="14" viewBox="0 0 14 14"><circle cx="7.5" cy="7" r="6.3" fill="#fff"/><circle cx="7.5" cy="7" r="5.3" fill="#86c994" stroke="#5cb06e" stroke-width="1"/><path d="M5,4.5 H10 M7.5,4.5 V10.5" stroke="#fff" stroke-width="1"/></svg>
<svg class="r" style="left:1232px;top:226px" width="21" height="21" viewBox="0 0 21 21"><path d="M0.65,0.65 H20.35 V20.35 H4.43 L0.65,17.22 Z" fill="#f6dc9c" stroke="#e3a625" stroke-width="1.3"/><rect x="4.62" y="0.65" width="11.760000000000002" height="8.82" fill="#fdfdfd" stroke="#e3a625" stroke-width="1.3"/><rect x="6.3" y="13.02" width="9.450000000000001" height="7.33" fill="#fdfdfd" stroke="#e3a625" stroke-width="1.3"/><rect x="7.77" y="15.12" width="1.26" height="3.36" fill="#e3a625"/></svg>
<svg class="r" style="left:1242px;top:236px" width="14" height="14" viewBox="0 0 14 14"><circle cx="7.5" cy="7" r="6.3" fill="#fff"/><circle cx="7.5" cy="7" r="5.3" fill="#e27070" stroke="#d05050" stroke-width="1"/><path d="M5,4.5 H10 M7.5,4.5 V10.5" stroke="#fff" stroke-width="1"/></svg>
<svg class="r" style="left:1315px;top:141px" width="46" height="50" viewBox="0 0 46 50"><path d="M0.82,1.35 H33.1 V11.4 L30.2,10.9 Q28.9,4.5 24.6,4 H10.3 L23.8,19.9 L9,37.9 H16.7 V42.9 H0.3 V41.6 L16.7,22 Z" fill="#777"/><path d="M22.099999999999998,31.8 V35.4 A11.2,4.4 0 0 0 44.5,35.4 V31.8 A11.2,4.4 0 0 0 22.099999999999998,31.8 Z" fill="#fff"/><path d="M23.099999999999998,31.8 V35.4 A10.2,3.4 0 0 0 43.5,35.4 V31.8 Z" fill="#e8b35a"/><path d="M24.099999999999998,33.78 A9.2,3.4 0 0 0 42.5,33.78" fill="none" stroke="#f6ddb0" stroke-width="1.1"/><ellipse cx="33.3" cy="31.8" rx="10.2" ry="3.4" fill="#e8b35a"/><path d="M17.400000000000002,40.6 V44.1 A11.2,4.2 0 0 0 39.8,44.1 V40.6 A11.2,4.2 0 0 0 17.400000000000002,40.6 Z" fill="#fff"/><path d="M18.400000000000002,40.6 V44.1 A10.2,3.2 0 0 0 38.8,44.1 V40.6 Z" fill="#e8b35a"/><path d="M19.400000000000002,42.525 A9.2,3.2 0 0 0 37.8,42.525" fill="none" stroke="#f6ddb0" stroke-width="1.1"/><ellipse cx="28.6" cy="40.6" rx="10.2" ry="3.2" fill="#e8b35a"/></svg>
<svg class="r" style="left:1426px;top:141px" width="45" height="48" viewBox="0 0 45 48"><path d="M1.4,1.3 V20.4 M41.9,1.3 V20.4" stroke="#8a8a8a" stroke-width="1.6"/><path d="M3.5,10.9 H15.2 M8,5.8 L3.5,10.9 L8,15.9 M27.9,10.9 H39.8 M34.9,5.8 L39.8,10.9 L34.9,15.9" fill="none" stroke="#3b96d6" stroke-width="1.6"/><rect x="1.9" y="24.6" width="40" height="21" fill="#93c9ee" stroke="#1f6abf" stroke-width="1.7"/></svg>
<svg class="r" style="left:1500px;top:138px" width="24" height="24" viewBox="0 0 24 24"><circle cx="11.5" cy="11.5" r="10.8" fill="#fff" stroke="#507890" stroke-width="1.1"/><path d="M15.5,6.5 L8,11.5 L15.5,16.5 Z" fill="#7bbbe8" stroke="#3a8ad0" stroke-width="1"/><path d="M7.5,6.5 V16.5" stroke="#3a8ad0" stroke-width="1.4"/></svg>
<svg class="r" style="left:1500px;top:182px" width="24" height="24" viewBox="0 0 24 24"><circle cx="11.5" cy="11.5" r="10.8" fill="#fff" stroke="#507890" stroke-width="1.1"/><path d="M8,6.5 L15.5,11.5 L8,16.5 Z" fill="#7bbbe8" stroke="#3a8ad0" stroke-width="1"/><path d="M16,6.5 V16.5" stroke="#3a8ad0" stroke-width="1.4"/></svg>
<svg class="r" style="left:1500px;top:224px" width="26" height="26" viewBox="0 0 26 26"><text x="0.5" y="8.5" font-family="Liberation Sans" font-size="9" fill="#2e8ad4" stroke="#2e8ad4" stroke-width="0.3">1</text><text x="0" y="16.5" font-family="Liberation Sans" font-size="9" fill="#2e8ad4" stroke="#2e8ad4" stroke-width="0.3">2</text><text x="0" y="24.5" font-family="Liberation Sans" font-size="9" fill="#2e8ad4" stroke="#2e8ad4" stroke-width="0.3">3</text><path d="M7,2.5 H16 M5.5,20 H8.5" stroke="#444" stroke-width="1.1"/><path d="M7,7.5 H16 M7,11 H16" stroke="#999" stroke-width="1.1"/><path d="M12.5,16 V18.2 A6,3 0 0 0 24.5,18.2 V16 A6,3 0 0 0 12.5,16 Z" fill="#fff"/><path d="M13.5,16 V18.2 A5,2 0 0 0 23.5,18.2 V16 Z" fill="#f0b050"/><path d="M14.5,17.21 A4,2 0 0 0 22.5,17.21" fill="none" stroke="#f8d8a0" stroke-width="1.1"/><ellipse cx="18.5" cy="16" rx="5" ry="2" fill="#f0b050"/><path d="M10.5,20.5 V22.7 A6,3 0 0 0 22.5,22.7 V20.5 A6,3 0 0 0 10.5,20.5 Z" fill="#fff"/><path d="M11.5,20.5 V22.7 A5,2 0 0 0 21.5,22.7 V20.5 Z" fill="#f0b050"/><path d="M12.5,21.71 A4,2 0 0 0 20.5,21.71" fill="none" stroke="#f8d8a0" stroke-width="1.1"/><ellipse cx="16.5" cy="20.5" rx="5" ry="2" fill="#f0b050"/></svg>
<svg class="r" style="left:1666px;top:137px" width="23" height="22" viewBox="0 0 23 22"><circle cx="3" cy="2.6" r="1.8" fill="none" stroke="#3a8ad0" stroke-width="1"/><circle cx="3" cy="10.2" r="1.8" fill="none" stroke="#3a8ad0" stroke-width="1"/><circle cx="3" cy="17.8" r="1.8" fill="none" stroke="#3a8ad0" stroke-width="1"/><path d="M6.5,3 H20.5 M6.5,10.5 H20.5 M6.5,18 H20.5" stroke="#555" stroke-width="0.9"/></svg>
<svg class="r" style="left:1665px;top:181px" width="25" height="26" viewBox="0 0 25 26"><text x="0.5" y="10.5" font-family="Liberation Sans" font-size="12" fill="#3a8ad0">A</text><text x="1" y="23.5" font-family="Liberation Sans" font-size="12.5" fill="#e84a5a">Z</text><path d="M11,5 H23.5 L19,11 V17.5 L16,16.5 V11 Z" fill="#fff" stroke="#555" stroke-width="1.1" stroke-linejoin="round"/></svg>
<svg class="r" style="left:1667px;top:226px" width="24" height="24" viewBox="0 0 24 24"><path d="M1,1 H12 L17,6 V14 M14,22.5 H1 V1" fill="none" stroke="#3a8ad0" stroke-width="1.1"/><path d="M12,1 V6 H17" fill="none" stroke="#3a8ad0" stroke-width="1"/><circle cx="17" cy="17" r="4.3" fill="#fff" stroke="#e84a5a" stroke-width="1.2"/><path d="M13.8,20.2 L10.5,23.5" stroke="#e84a5a" stroke-width="1.3"/></svg>
<svg class="r" style="left:1739px;top:140px" width="52" height="50" viewBox="0 0 52 50"><path d="M1.1,7 L17.9,1.6 V45.3 L1.1,39.9 Z" fill="#c8c8c8" stroke="#555" stroke-width="1.6" stroke-linejoin="round"/><path d="M20.3,4.4 H34.6 V15.2 M20.3,42 H27.7" fill="none" stroke="#333" stroke-width="1.6"/><path d="M23.3,22.6 H45.3 M38.8,16.3 L45.3,22.6 L42,25.6" fill="none" stroke="#e53a3a" stroke-width="1.6"/><path d="M38.1,25.3 Q33,28.7 27.7,28.9 V36 Q28.5,45 38.1,48.6 Q47.7,45 48.6,36 V28.9 Q43.2,28.7 38.1,25.3 Z" fill="#fff" stroke="#fff" stroke-width="2"/><path d="M38.1,25.3 Q33,28.7 27.7,28.9 V36 Q28.5,45 38.1,48.6 Q47.7,45 48.6,36 V28.9 Q43.2,28.7 38.1,25.3 Z" fill="#8fcf9f" stroke="#22a052" stroke-width="1.5" stroke-linejoin="round"/><path d="M33.8,37.2 L37.4,40.7 L44,33" fill="none" stroke="#eef8f0" stroke-width="1.6"/></svg>
<svg class="r" style="left:56px;top:304px" width="24" height="24" viewBox="0 0 24 24"><text x="1.5" y="8" font-family="Liberation Sans" font-weight="bold" font-size="7.5" fill="#e3364a">1</text><text x="1" y="15.5" font-family="Liberation Sans" font-weight="bold" font-size="7.5" fill="#e3364a">2</text><text x="1" y="23" font-family="Liberation Sans" font-weight="bold" font-size="7.5" fill="#e3364a">3</text><path d="M8,5.5 H22 M8,13 H22 M8,20.5 H22" stroke="#555d5f" stroke-width="1.5"/></svg>
<svg class="r" style="left:360px;top:304px" width="22" height="25" viewBox="0 0 22 25"><path d="M1.5,1.5 H16 V12 M12,18 H1.5 Z" fill="none" stroke="#555" stroke-width="1.3"/><path d="M1.5,1.5 V18 H11" fill="none" stroke="#555" stroke-width="1.3"/><circle cx="15.5" cy="18.5" r="4.2" fill="#1f7ad0"/><circle cx="15.5" cy="18.5" r="1.4" fill="#fff"/><path d="M15.5,12.5 V24.5 M9.5,18.5 H21.5 M11.3,14.3 L19.7,22.7 M19.7,14.3 L11.3,22.7" stroke="#1f7ad0" stroke-width="1.8"/><circle cx="15.5" cy="18.5" r="1.5" fill="#fff"/></svg>
<svg class="r" style="left:543px;top:304px" width="20" height="24" viewBox="0 0 20 24"><rect x="1" y="1.5" width="17" height="20.5" fill="#fff" stroke="#555" stroke-width="1.3"/><text x="9.5" y="12" text-anchor="middle" font-family="Liberation Sans" font-weight="bold" font-size="10.5" fill="#1f7ad0">A</text><path d="M4,15 H15 M4,17.5 H15" stroke="#777" stroke-width="1"/></svg>
<svg class="r" style="left:1129px;top:304px" width="25" height="25" viewBox="0 0 25 25"><rect x="0.8" y="1" width="17" height="20" fill="#fff" stroke="#555" stroke-width="1.4"/><rect x="3" y="3.5" width="12.5" height="3.5" fill="#1f7ad0"/><path d="M3.5,10.5 h2.5 M7.5,10.5 h2.5 M3.5,14.5 h2.5 M7.5,14.5 h2.5 M3.5,18 h2.5" stroke="#555" stroke-width="2.2"/><path d="M11.5,10.5 h2.5" stroke="#f08a24" stroke-width="2.2"/><rect x="11" y="13" width="12.5" height="11" fill="#fff"/><path d="M12,14.8 h3.6 M17.8,14.8 h3.6 M12,19 h3.6 M17.8,19 h3.6 M12,23 h3.6 M17.8,23 h3.6" stroke="#b5b5b5" stroke-width="2.8"/></svg>
<svg class="r" style="left:1227px;top:303px" width="26" height="26" viewBox="0 0 26 26"><path d="M10.5,2 A8,8 0 1 0 18.5,10 H10.5 Z" fill="#1f7ad0"/><path d="M12,0.5 A8,8 0 0 1 20,8.5 H12 Z" fill="#1d8a6a"/><path d="M24.5,8.5 V24.5 H8.5 Z" fill="#f28a1a"/><path d="M19.5,17.5 V20.5 H16.5 Z" fill="#fff"/></svg>
<svg class="r" style="left:1704px;top:308px" width="25" height="18" viewBox="0 0 25 18"><rect x="0.9" y="0.9" width="22.7" height="15" rx="1.5" fill="#fff" stroke="#555" stroke-width="1.5"/><path d="M15.5,4.5 V3.5 H8.5 L12,8.5 L8.5,13 H15.5 V12" fill="none" stroke="#e5364a" stroke-width="1.6"/></svg>
<svg class="r" style="left:1792px;top:304px" width="26" height="25" viewBox="0 0 26 25"><rect x="1" y="1" width="21" height="4.2" fill="#1f7ad0"/><path d="M1,9 h5 M8,9 h5 M15,9 h5 M1,14.5 h5 M8,14.5 h5 M15,14.5 h4" stroke="#b0b0b0" stroke-width="3.5"/><path d="M24,17 V16 H16.5 L20.5,20 L16.5,24 H24 V23" fill="none" stroke="#1f7ad0" stroke-width="1.8"/></svg>
<svg class="r" style="left:14px;top:638px" width="19" height="19" viewBox="0 0 19 19"><path d="M2,16.5 V13 L12.8,2.2 Q13.5,1.5 14.2,2.2 L16.8,4.8 Q17.5,5.5 16.8,6.2 L6,17 H2.5 Z M10.5,4.5 L14.5,8.5" fill="none" stroke="#1f6fc4" stroke-width="1.6" stroke-linejoin="round"/></svg>
<svg class="r" style="left:1769px;top:719px" width="22" height="32" viewBox="0 0 22 32"><path d="M1.4,2.2 V25.5 L6.7,20.6 L10.3,28.3 L14.7,26.3 L11.3,20.3 H18.7 Z" fill="#fff" stroke="#1a1a22" stroke-width="1.2" stroke-linejoin="round"/></svg>
</body></html>
